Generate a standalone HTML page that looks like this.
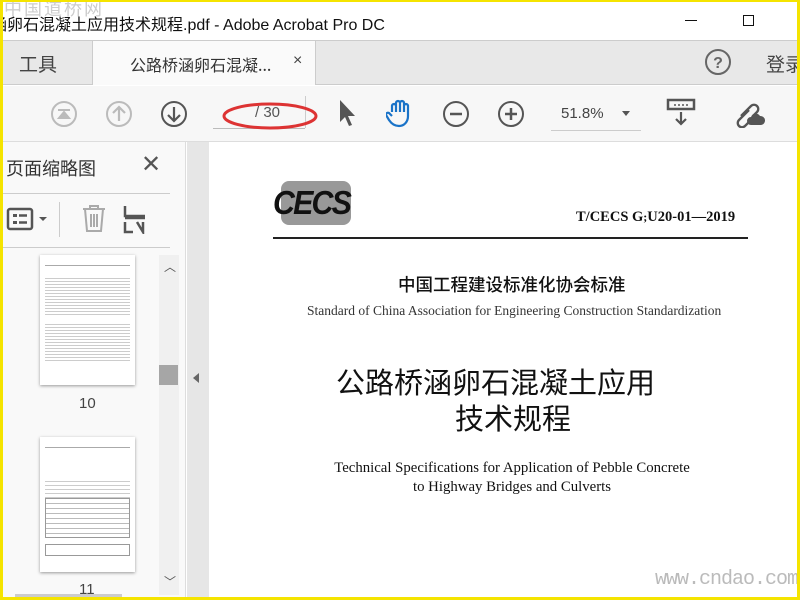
<!DOCTYPE html>
<html><head><meta charset="utf-8"><style>
*{margin:0;padding:0;box-sizing:border-box}
body{width:800px;height:600px;overflow:hidden;background:#fff;font-family:"Liberation Sans","Noto Sans CJK SC",sans-serif;position:relative}
.a{position:absolute}
.cjk{font-family:"Noto Sans CJK SC",sans-serif}
.serif{font-family:"Liberation Serif","Noto Serif CJK SC",serif}
</style></head><body>
<!-- title bar -->
<div class="a" style="left:0;top:0;width:800px;height:40px;background:#fff"></div>
<div class="a cjk" style="left:4px;top:-5px;font-size:18px;color:#ccc;letter-spacing:2px">中国道桥网</div>
<div class="a" style="left:-9px;top:11px;font-size:16px;color:#111;white-space:nowrap;font-family:'Liberation Sans','Noto Sans CJK SC',sans-serif">涵卵石混凝土应用技术规程.pdf - Adobe Acrobat Pro DC</div>
<div class="a" style="left:685px;top:20px;width:12px;height:1px;background:#111"></div>
<div class="a" style="left:743px;top:15px;width:11px;height:11px;border:1px solid #111"></div>
<!-- tab bar -->
<div class="a" style="left:0;top:40px;width:800px;height:45px;background:#e8e8e8;border-top:1px solid #ccc;border-bottom:1px solid #ccc"></div>
<div class="a cjk" style="left:19px;top:50px;font-size:19px;color:#444">工具</div>
<div class="a" style="left:92px;top:41px;width:224px;height:44px;background:#fafafa;border-left:1px solid #ccc;border-right:1px solid #ccc"></div>
<div class="a cjk" style="left:130px;top:52px;font-size:16px;color:#333">公路桥涵卵石混凝...</div>
<div class="a" style="left:293px;top:52px;font-size:16px;color:#444">×</div>
<svg class="a" style="left:703px;top:48px" width="30" height="30"><circle cx="15" cy="14" r="12" fill="none" stroke="#666" stroke-width="2"/><text x="15" y="20" text-anchor="middle" font-size="16" font-weight="bold" fill="#666" font-family="Liberation Sans">?</text></svg>
<div class="a cjk" style="left:766px;top:50px;font-size:19px;color:#444;white-space:nowrap">登录</div>
<!-- toolbar -->
<div class="a" style="left:0;top:86px;width:800px;height:56px;background:#f7f7f7;border-bottom:1px solid #ddd"></div>
<svg class="a" style="left:50px;top:100px" width="28" height="28"><circle cx="14" cy="14" r="12" fill="none" stroke="#bbb" stroke-width="2"/><path d="M8 10h12M9 18l5-6 5 6z" stroke="#bbb" stroke-width="2" fill="#bbb"/></svg>
<svg class="a" style="left:105px;top:100px" width="28" height="28"><circle cx="14" cy="14" r="12" fill="none" stroke="#bbb" stroke-width="2"/><path d="M14 21V7M8 13l6-6 6 6" stroke="#bbb" stroke-width="2.2" fill="none"/></svg>
<svg class="a" style="left:160px;top:100px" width="28" height="28"><circle cx="14" cy="14" r="12" fill="none" stroke="#555" stroke-width="2"/><path d="M14 7v14M8 15l6 6 6-6" stroke="#555" stroke-width="2.2" fill="none"/></svg>
<div class="a" style="left:213px;top:128px;width:92px;height:1px;background:#bbb"></div>
<div class="a" style="left:305px;top:96px;width:1px;height:32px;background:#ccc"></div>
<div class="a" style="left:255px;top:104px;font-size:15px;color:#555">/ 30</div>
<svg class="a" style="left:220px;top:96px" width="100" height="40"><ellipse cx="50" cy="20" rx="46" ry="12" fill="none" stroke="#d33" stroke-width="3"/></svg>
<svg class="a" style="left:336px;top:98px" width="22" height="30"><path d="M4 2v22l5-5 4 9 3-1-4-9h7z" fill="#555"/></svg>
<svg class="a" style="left:386px;top:98px" width="30" height="32"><path d="M6 14V8a2 2 0 014 0v6V5a2 2 0 014 0v9V5a2 2 0 014 0v9V8a2 2 0 014 0v10c0 6-4 10-9 10s-8-3-10-6l-3-5a2 2 0 013-2l3 3" fill="none" stroke="#1a73c8" stroke-width="2.2"/></svg>
<svg class="a" style="left:442px;top:100px" width="28" height="28"><circle cx="14" cy="14" r="12" fill="none" stroke="#555" stroke-width="2"/><path d="M8 14h12" stroke="#555" stroke-width="2.5"/></svg>
<svg class="a" style="left:497px;top:100px" width="28" height="28"><circle cx="14" cy="14" r="12" fill="none" stroke="#555" stroke-width="2"/><path d="M8 14h12M14 8v12" stroke="#555" stroke-width="2.5"/></svg>
<div class="a" style="left:561px;top:105px;font-size:15px;color:#444">51.8%</div>
<div class="a" style="left:622px;top:111px;border:4px solid transparent;border-top:5px solid #555"></div>
<div class="a" style="left:551px;top:130px;width:90px;height:1px;background:#ccc"></div>
<svg class="a" style="left:666px;top:98px" width="30" height="30"><rect x="2" y="2" width="26" height="9" fill="none" stroke="#555" stroke-width="2.5"/><path d="M8 7h2M12 7h2M16 7h2M20 7h2" stroke="#555" stroke-width="1.5"/><path d="M15 14v12M10 21l5 5 5-5" stroke="#555" stroke-width="2.2" fill="none"/></svg>
<svg class="a" style="left:733px;top:98px" width="36" height="30"><path d="M8 18l10-10a4 4 0 016 6l-4 4M16 12l-10 10a4 4 0 006 6l4-4" fill="none" stroke="#555" stroke-width="2.3"/><path d="M18 27a4 4 0 010-8a5 5 0 019-1a4 4 0 011 9z" fill="#555"/></svg>
<!-- left panel -->
<div class="a" style="left:0;top:142px;width:186px;height:458px;background:#f9f9f9;border-right:1px solid #ddd"></div>
<div class="a cjk" style="left:6px;top:155px;font-size:18px;color:#333">页面缩略图</div>
<div class="a" style="left:141px;top:150px;font-size:24px;color:#555">✕</div>
<div class="a" style="left:0;top:193px;width:170px;height:1px;background:#ccc"></div>
<svg class="a" style="left:6px;top:205px" width="44" height="28"><rect x="2" y="4" width="24" height="20" rx="2" fill="none" stroke="#555" stroke-width="2.5"/><rect x="7" y="9" width="4" height="3" fill="#555"/><rect x="7" y="16" width="4" height="3" fill="#555"/><path d="M13 10.5h8M13 17.5h8" stroke="#555" stroke-width="2.5"/><path d="M33 12l4 4 4-4z" fill="#555"/></svg>
<div class="a" style="left:59px;top:202px;width:1px;height:35px;background:#ccc"></div>
<svg class="a" style="left:80px;top:204px" width="28" height="30"><path d="M3 5h22M10 5V2h8v3M5 5l2 22h14l2-22M11 10v13M14 10v13M17 10v13" fill="none" stroke="#aaa" stroke-width="2"/></svg>
<svg class="a" style="left:122px;top:204px" width="24" height="30"><path d="M3 2v10h20M3 14h20M3 18v10h8M21 18v10l-6-10" fill="none" stroke="#555" stroke-width="2.5"/></svg>
<div class="a" style="left:0;top:247px;width:170px;height:1px;background:#ccc"></div>
<!-- thumbs -->
<div class="a" style="left:40px;top:255px;width:95px;height:130px;background:#fff;box-shadow:0 1px 3px #999;padding:6px 5px;font-size:0">
<div style="height:1px;background:#aaa;margin:4px 0 10px"></div>
<div style="height:40px;background:repeating-linear-gradient(#fff 0 2px,#ccc 2px 3px)"></div>
<div style="height:40px;margin-top:6px;background:repeating-linear-gradient(#fff 0 2px,#ccc 2px 3px)"></div>
</div>
<div class="a" style="left:79px;top:395px;font-size:15px;color:#444">10</div>
<div class="a" style="left:40px;top:437px;width:95px;height:135px;background:#fff;box-shadow:0 1px 3px #999;padding:6px 5px;font-size:0">
<div style="height:1px;background:#aaa;margin:4px 0 30px"></div>
<div style="height:20px;background:repeating-linear-gradient(#fff 0 3px,#ccc 3px 4px)"></div>
<div style="height:40px;border:1px solid #999;background:repeating-linear-gradient(#fff 0 4px,#bbb 4px 5px)"></div>
<div style="height:12px;margin-top:6px;border:1px solid #999"></div>
</div>
<div class="a" style="left:79px;top:581px;font-size:15px;color:#444">11</div>
<div class="a" style="left:159px;top:255px;width:20px;height:340px;background:#f0f0f0"></div>
<div class="a" style="left:164px;top:258px;font-size:12px;color:#555">︿</div>
<div class="a" style="left:159px;top:365px;width:19px;height:20px;background:#a6a6a6"></div>
<div class="a" style="left:164px;top:573px;font-size:12px;color:#555">﹀</div>
<div class="a" style="left:15px;top:594px;width:107px;height:4px;background:#ccc"></div>
<!-- page area -->
<div class="a" style="left:187px;top:142px;width:22px;height:458px;background:#e6e6e6"></div>
<div class="a" style="left:193px;top:373px;border:5px solid transparent;border-right:6px solid #666;border-left:0"></div>
<div class="a" style="left:209px;top:142px;width:591px;height:458px;background:#fff"></div>
<!-- CECS logo -->
<div class="a" style="left:281px;top:181px;width:70px;height:44px;background:#999;border-radius:8px"></div>
<div class="a" style="left:273px;top:184px;font-size:33px;font-weight:bold;font-style:italic;color:#111;letter-spacing:-2px;transform:scaleX(0.92);transform-origin:left">CECS</div>
<div class="a serif" style="left:576px;top:209px;font-size:14.5px;font-weight:bold;color:#111;white-space:nowrap">T/CECS G<span style="font-size:12px">;</span>U20-01—2019</div>
<div class="a" style="left:273px;top:237px;width:475px;height:2px;background:#222"></div>
<div class="a cjk" style="left:398px;top:272px;font-size:17.5px;color:#111;font-weight:500">中国工程建设标准化协会标准</div>
<div class="a serif" style="left:307px;top:303px;font-size:13.5px;color:#333;white-space:nowrap">Standard of China Association for Engineering Construction Standardization</div>
<div class="a cjk" style="left:336px;top:362px;font-size:29px;color:#111;line-height:38px;white-space:nowrap">公路桥涵卵石混凝土应用</div>
<div class="a cjk" style="left:455px;top:398px;font-size:29px;color:#111;line-height:38px">技术规程</div>
<div class="a serif" style="left:232px;top:459px;width:560px;text-align:center;font-size:14.8px;color:#111;line-height:19px">Technical Specifications for Application of Pebble Concrete<br>to Highway Bridges and Culverts</div>
<div class="a" style="left:655px;top:568px;font-size:20px;color:#bbb;font-family:'Liberation Mono',monospace;letter-spacing:-1px">www.cndao.com</div>
<!-- yellow border -->
<div class="a" style="left:0;top:0;width:800px;height:600px;border:3px solid #f5e400;border-top-width:2px;pointer-events:none"></div>
</body></html>
